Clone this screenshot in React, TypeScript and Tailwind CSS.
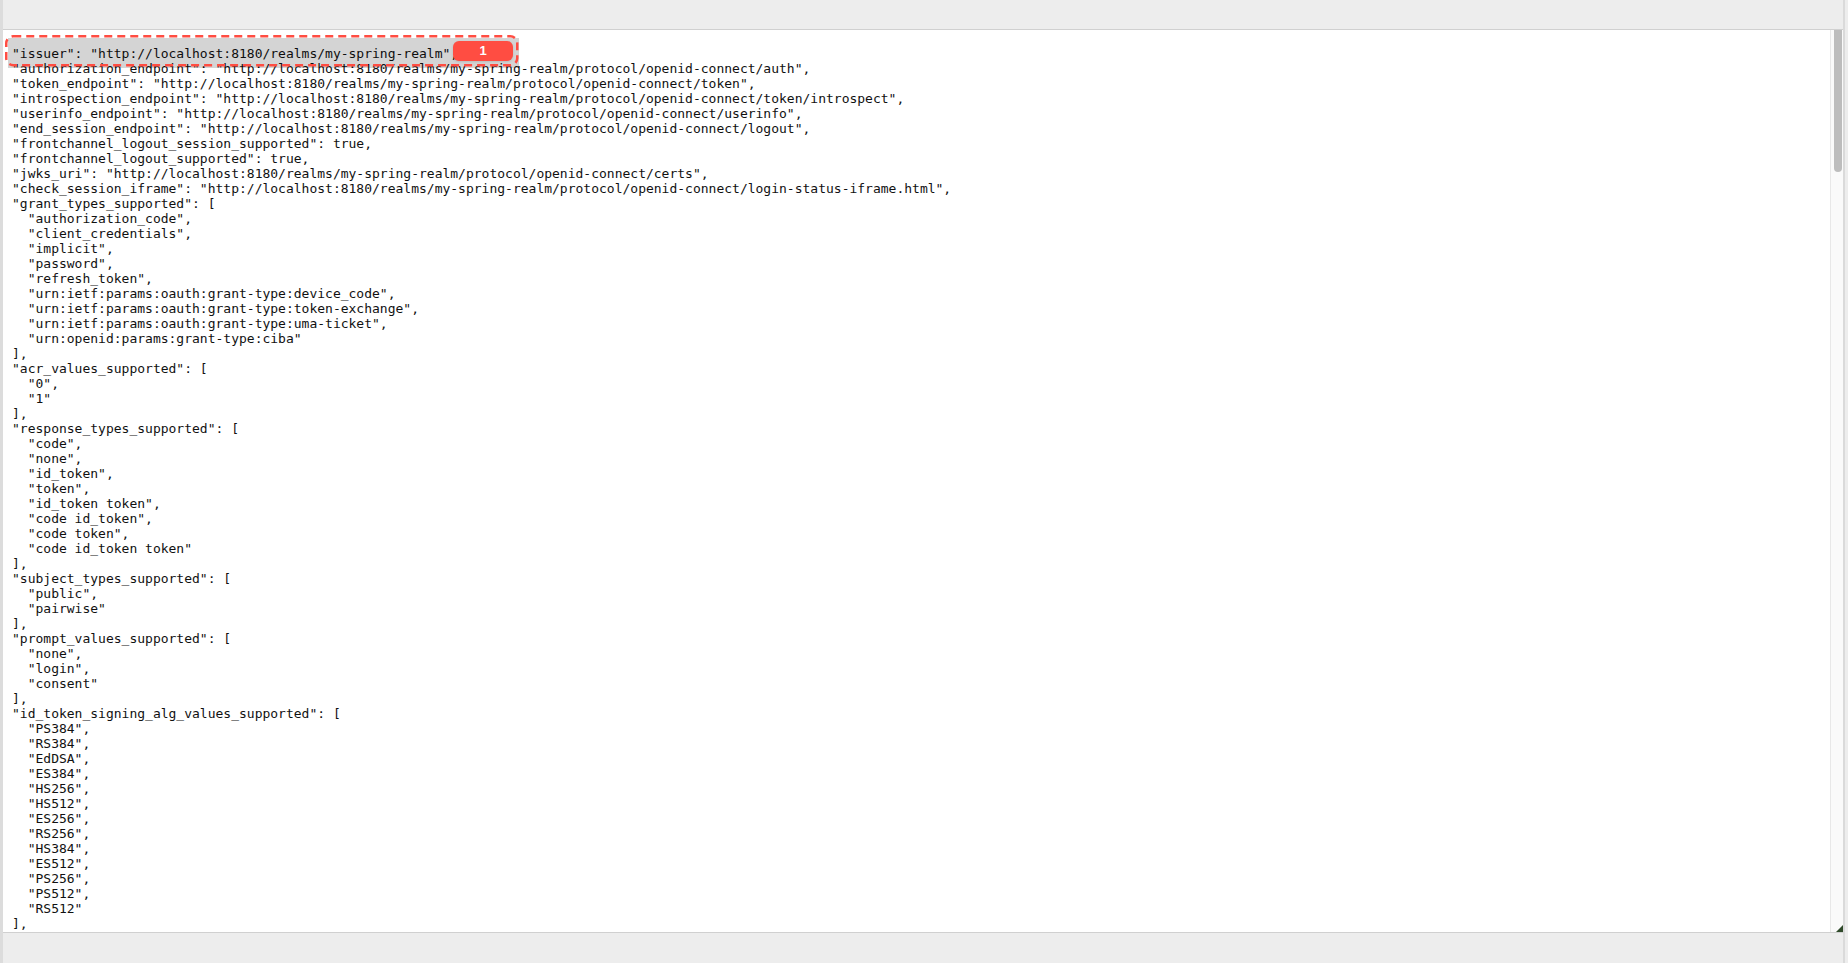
const lines = [
  `"issuer": "http://localhost:8180/realms/my-spring-realm",`,
  `"authorization_endpoint": "http://localhost:8180/realms/my-spring-realm/protocol/openid-connect/auth",`,
  `"token_endpoint": "http://localhost:8180/realms/my-spring-realm/protocol/openid-connect/token",`,
  `"introspection_endpoint": "http://localhost:8180/realms/my-spring-realm/protocol/openid-connect/token/introspect",`,
  `"userinfo_endpoint": "http://localhost:8180/realms/my-spring-realm/protocol/openid-connect/userinfo",`,
  `"end_session_endpoint": "http://localhost:8180/realms/my-spring-realm/protocol/openid-connect/logout",`,
  `"frontchannel_logout_session_supported": true,`,
  `"frontchannel_logout_supported": true,`,
  `"jwks_uri": "http://localhost:8180/realms/my-spring-realm/protocol/openid-connect/certs",`,
  `"check_session_iframe": "http://localhost:8180/realms/my-spring-realm/protocol/openid-connect/login-status-iframe.html",`,
  `"grant_types_supported": [`,
  `  "authorization_code",`,
  `  "client_credentials",`,
  `  "implicit",`,
  `  "password",`,
  `  "refresh_token",`,
  `  "urn:ietf:params:oauth:grant-type:device_code",`,
  `  "urn:ietf:params:oauth:grant-type:token-exchange",`,
  `  "urn:ietf:params:oauth:grant-type:uma-ticket",`,
  `  "urn:openid:params:grant-type:ciba"`,
  `],`,
  `"acr_values_supported": [`,
  `  "0",`,
  `  "1"`,
  `],`,
  `"response_types_supported": [`,
  `  "code",`,
  `  "none",`,
  `  "id_token",`,
  `  "token",`,
  `  "id_token token",`,
  `  "code id_token",`,
  `  "code token",`,
  `  "code id_token token"`,
  `],`,
  `"subject_types_supported": [`,
  `  "public",`,
  `  "pairwise"`,
  `],`,
  `"prompt_values_supported": [`,
  `  "none",`,
  `  "login",`,
  `  "consent"`,
  `],`,
  `"id_token_signing_alg_values_supported": [`,
  `  "PS384",`,
  `  "RS384",`,
  `  "EdDSA",`,
  `  "ES384",`,
  `  "HS256",`,
  `  "HS512",`,
  `  "ES256",`,
  `  "RS256",`,
  `  "HS384",`,
  `  "ES512",`,
  `  "PS256",`,
  `  "PS512",`,
  `  "RS512"`,
  `],`,
];

export default function App() {
  return (
    <div className="h-[963px] w-[1848px] flex overflow-hidden bg-[#ededed]">
      <div className="w-[3px] shrink-0 bg-[#dcdcdc]" />

      <div className="flex-1 min-w-0 flex flex-col">
        {/* browser chrome top */}
        <div className="h-[30px] shrink-0 bg-[#ededed] border-b border-[#d0d0d0]" />

        <div className="flex-1 min-h-0 flex">
          <div className="relative flex-1 min-w-0 bg-white overflow-hidden pl-[9px] pt-[16px]">
            <pre className="font-['DejaVu_Sans_Mono',monospace] text-[13px] leading-[15px] text-[#111]">
              {lines.join("\n")}
            </pre>

            {/* highlight annotation */}
            <div className="absolute left-[5px] top-[8px] w-[511px] h-[30px] bg-black/[0.17]" />
            <svg className="absolute left-[1px] top-[4px]" width="516" height="34" fill="none">
              <rect x="2.25" y="2.25" width="511" height="29" rx="7" stroke="#ff4d42" strokeWidth="2.5" strokeDasharray="8 5" />
            </svg>
            <div className="absolute left-[450px] top-[11px] w-[60px] h-[20px] rounded-[6px] bg-[#ff4d42] shadow-sm text-white text-center font-['Liberation_Sans',sans-serif] font-bold text-[13px] leading-[20px]">
              1
            </div>
          </div>

          {/* scrollbar */}
          <div className="relative w-[13px] shrink-0 bg-[#fafafa] border-l border-[#e8e8e8] pl-[3px]">
            <div className="w-[8px] h-[142px] bg-[#bdbdbd] rounded-b-[4px]" />
            <svg className="absolute right-0 bottom-0" width="7" height="7">
              <path d="M7 0V7H0Z" fill="#2f4a2a" />
            </svg>
          </div>
        </div>

        <div className="h-[31px] shrink-0 bg-[#ededed] border-t border-[#d0d0d0]" />
      </div>

      <div className="w-[2px] shrink-0 bg-[#dadada]" />
      <div className="w-[3px] shrink-0 bg-[#ededed]" />
    </div>
  );
}
